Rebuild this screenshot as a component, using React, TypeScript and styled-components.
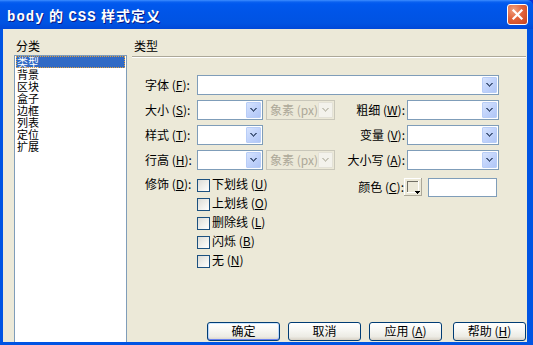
import React from 'react';
import styled, { createGlobalStyle } from 'styled-components';

const GlobalStyle = createGlobalStyle`
  html, body { margin: 0; padding: 0; background: #0831D9; }
  body {
    font-family: "Noto Sans CJK SC", "Liberation Sans", sans-serif;
    font-size: 12px;
    color: #000;
  }
  * { box-sizing: border-box; }
`;

const Window = styled.div`
  width: 533px;
  height: 345px;
  display: flex;
  flex-direction: column;
  background: #0054E3;
  border-top-right-radius: 6px;
  overflow: hidden;
`;

const TitleBar = styled.div`
  height: 29px;
  flex: none;
  display: flex;
  align-items: center;
  justify-content: space-between;
  padding: 1px 5px 0 7px;
  background: linear-gradient(
    to bottom,
    #3D8DFF 0px,
    #0A61F0 2px,
    #0058EE 4px,
    #0055E8 40%,
    #0053E2 80%,
    #0048D8 100%
  );
`;

const TitleText = styled.div`
  color: #fff;
  font-family: "Liberation Mono", "Noto Sans CJK SC", monospace;
  font-weight: bold;
  font-size: 14px;
  letter-spacing: 1px;
  word-spacing: -5px;
  text-shadow: 1px 1px 0 #0A1883;
  white-space: nowrap;
`;

const CloseButton = styled.div`
  width: 21px;
  height: 21px;
  border: 1px solid #fff;
  border-radius: 3px;
  background: radial-gradient(circle at 30% 25%, #F0A080 0%, #E2643C 45%, #C6421C 100%);
  display: flex;
  align-items: center;
  justify-content: center;
  margin-top: -1px;
`;

const Client = styled.div`
  flex: 1;
  margin: 0 6px 3px 3px;
  background: #ECE9D8;
  display: grid;
  grid-template-columns: 113px 1fr;
  column-gap: 5px;
  padding: 10px 3px 0 11px;
  min-height: 0;
`;

const Column = styled.div`
  display: flex;
  flex-direction: column;
  min-height: 0;
`;

const Caption = styled.div`
  line-height: 14px;
  height: 14px;
  padding-left: 2px;
  margin-bottom: 2px;
  white-space: nowrap;
`;

const ListBox = styled.div`
  flex: 1;
  background: #fff;
  border: 1px solid #7F9DB9;
  border-bottom: none;
  padding-top: 0;
`;

const ListItem = styled.div<{ $selected?: boolean }>`
  height: 12px;
  line-height: 12px;
  font-size: 11px;
  margin: 0 1px;
  padding-left: 1px;
  white-space: nowrap;
  background: ${p => (p.$selected ? '#316AC5' : 'transparent')};
  color: ${p => (p.$selected ? '#fff' : '#000')};
  outline: ${p => (p.$selected ? '1px dotted #E0A040' : 'none')};
  outline-offset: -1px;
`;

const Divider = styled.div`
  height: 2px;
  margin-top: 1px;
  border-top: 1px solid #ACA899;
  border-bottom: 1px solid #fff;
`;

const Form = styled.div`
  display: flex;
  flex-direction: column;
  gap: 5px;
  margin-top: 17px;
  padding-left: 13px;
`;

const Row = styled.div<{ $top?: boolean; $mt?: number }>`
  display: flex;
  align-items: ${p => (p.$top ? 'flex-start' : 'center')};
  height: ${p => (p.$top ? 'auto' : '20px')};
  margin-top: ${p => p.$mt ?? 0}px;
`;

const FieldLabel = styled.span<{ $w: number; $right?: boolean; $mr?: number }>`
  width: ${p => p.$w}px;
  flex: none;
  text-align: ${p => (p.$right ? 'right' : 'left')};
  margin-right: ${p => p.$mr ?? 0}px;
  line-height: 14px;
  white-space: nowrap;
`;

const Key = styled.span`
  text-decoration: underline;
`;

const Combo = styled.div<{ $w: number; $ml?: number; $disabled?: boolean }>`
  width: ${p => p.$w}px;
  height: 20px;
  flex: none;
  margin-left: ${p => p.$ml ?? 0}px;
  border: 1px solid ${p => (p.$disabled ? '#C9C7BA' : '#7F9DB9')};
  background: ${p => (p.$disabled ? '#ECE9D8' : '#fff')};
  padding: 1px;
  display: flex;
  align-items: stretch;
  justify-content: space-between;
`;

const ComboText = styled.span`
  color: #ACA899;
  line-height: 16px;
  padding-left: 2px;
  white-space: nowrap;
  overflow: hidden;
`;

const DropButton = styled.div<{ $disabled?: boolean }>`
  width: 15px;
  flex: none;
  margin-left: auto;
  border: 1px solid ${p => (p.$disabled ? '#E3E1D7' : '#B8CDF7')};
  border-radius: 1px;
  background: ${p =>
    p.$disabled
      ? '#F3F2EC'
      : 'linear-gradient(135deg, #D6E3FD 0%, #C1D3FB 50%, #B0C6F6 100%)'};
  display: flex;
  align-items: center;
  justify-content: center;
`;

const Spacer = styled.div<{ $w: number }>`
  width: ${p => p.$w}px;
  flex: none;
`;

const CheckList = styled.div`
  width: 138px;
  flex: none;
  display: flex;
  flex-direction: column;
`;

const CheckItem = styled.div`
  height: 19px;
  display: flex;
  align-items: flex-start;
  gap: 2px;
  white-space: nowrap;
  line-height: 14px;
`;

const CheckBox = styled.span`
  width: 13px;
  height: 13px;
  flex: none;
  margin-top: 2px;
  border: 1px solid #1C5180;
  background: linear-gradient(135deg, #DCDCD7 0%, #F0F0EC 55%, #FFFFFF 100%);
`;

const ColorGroup = styled.div`
  display: flex;
  align-items: center;
  height: 20px;
`;

const Swatch = styled.div`
  width: 18px;
  height: 18px;
  flex: none;
`;

const TextBox = styled.div<{ $w: number; $ml?: number }>`
  width: ${p => p.$w}px;
  height: 19px;
  flex: none;
  margin-left: ${p => p.$ml ?? 0}px;
  border: 1px solid #7F9DB9;
  background: #fff;
`;

const Grow = styled.div`
  flex: 1;
`;

const ButtonBar = styled.div`
  display: flex;
  gap: 8px;
  padding-left: 75px;
  padding-bottom: 1px;
`;

const Button = styled.div<{ $default?: boolean; $ml?: number }>`
  width: 73px;
  height: 19px;
  flex: none;
  margin-left: ${p => p.$ml ?? 0}px;
  border: 1px solid #003C74;
  border-radius: 3px;
  background: linear-gradient(to bottom, #FFFFFF 0%, #F6F6F2 45%, #ECEBE4 80%, #D8D2C6 100%);
  box-shadow: ${p =>
    p.$default
      ? 'inset 0 1px 0 #CEE7FF, inset 0 -1px 0 #6982EE, inset 1px 0 0 #B8D6FB, inset -1px 0 0 #B8D6FB'
      : 'none'};
  text-align: center;
  line-height: 16px;
  white-space: nowrap;
`;

const Chevron: React.FC<{ color: string }> = ({ color }) => (
  <svg width="7" height="4" viewBox="0 0 7 4" shapeRendering="crispEdges">
    <rect x="0" y="0" width="2" height="1" fill={color} />
    <rect x="5" y="0" width="2" height="1" fill={color} />
    <rect x="1" y="1" width="2" height="1" fill={color} />
    <rect x="4" y="1" width="2" height="1" fill={color} />
    <rect x="2" y="2" width="3" height="1" fill={color} />
    <rect x="3" y="3" width="1" height="1" fill={color} />
  </svg>
);

const ComboBox: React.FC<{ w: number; ml?: number; disabled?: boolean; text?: string }> = ({
  w,
  ml,
  disabled,
  text,
}) => (
  <Combo $w={w} $ml={ml} $disabled={disabled}>
    {text ? <ComboText>{text}</ComboText> : null}
    <DropButton $disabled={disabled}>
      <Chevron color={disabled ? '#C9C7BA' : '#4D6185'} />
    </DropButton>
  </Combo>
);

const Lbl: React.FC<{ text: string; k: string; w: number; right?: boolean; mr?: number }> = ({
  text,
  k,
  w,
  right,
  mr,
}) => (
  <FieldLabel $w={w} $right={right} $mr={mr}>
    {text} (<Key>{k}</Key>):
  </FieldLabel>
);

const ColorSwatch = () => (
  <Swatch>
    <svg width="18" height="18" viewBox="0 0 18 18" shapeRendering="crispEdges">
      <rect x="0" y="0" width="18" height="18" fill="#ECE9D8" />
      <rect x="0" y="0" width="18" height="1" fill="#FFFFFF" />
      <rect x="0" y="0" width="1" height="18" fill="#FFFFFF" />
      <rect x="0" y="17" width="18" height="1" fill="#ACA899" />
      <rect x="17" y="0" width="1" height="18" fill="#ACA899" />
      <rect x="3" y="3" width="11" height="1" fill="#716F64" />
      <rect x="3" y="3" width="1" height="11" fill="#716F64" />
      <rect x="3" y="14" width="12" height="1" fill="#FFFFFF" />
      <rect x="14" y="3" width="1" height="12" fill="#FFFFFF" />
      <rect x="11" y="13" width="5" height="1" fill="#000" />
      <rect x="12" y="14" width="3" height="1" fill="#000" />
      <rect x="13" y="15" width="1" height="1" fill="#000" />
    </svg>
  </Swatch>
);

const categories = ['类型', '背景', '区块', '盒子', '边框', '列表', '定位', '扩展'];

const decorations: [string, string][] = [
  ['下划线', 'U'],
  ['上划线', 'O'],
  ['删除线', 'L'],
  ['闪烁', 'B'],
  ['无', 'N'],
];

export default function App() {
  return (
    <>
      <GlobalStyle />
      <Window>
        <TitleBar>
          <TitleText>body 的 CSS 样式定义</TitleText>
          <CloseButton>
            <svg width="13" height="13" viewBox="0 0 13 13">
              <path d="M2.5 2.5 L10.5 10.5 M10.5 2.5 L2.5 10.5" stroke="#fff" strokeWidth="2.2" strokeLinecap="square" />
            </svg>
          </CloseButton>
        </TitleBar>
        <Client>
          <Column>
            <Caption>分类</Caption>
            <ListBox>
              {categories.map((c, i) => (
                <ListItem key={c} $selected={i === 0}>
                  {c}
                </ListItem>
              ))}
            </ListBox>
          </Column>
          <Column>
            <Caption>类型</Caption>
            <Divider />
            <Form>
              <Row>
                <Lbl text="字体" k="F" w={52} />
                <ComboBox w={302} />
              </Row>
              <Row>
                <Lbl text="大小" k="S" w={52} />
                <ComboBox w={66} />
                <ComboBox w={69} ml={3} disabled text="象素 (px)" />
                <Lbl text="粗细" k="W" w={70} right mr={2} />
                <ComboBox w={92} />
              </Row>
              <Row>
                <Lbl text="样式" k="T" w={52} />
                <ComboBox w={66} />
                <Spacer $w={72} />
                <Lbl text="变量" k="V" w={70} right mr={2} />
                <ComboBox w={92} />
              </Row>
              <Row>
                <Lbl text="行高" k="H" w={52} />
                <ComboBox w={66} />
                <ComboBox w={69} ml={3} disabled text="象素 (px)" />
                <Lbl text="大小写" k="A" w={70} right mr={2} />
                <ComboBox w={92} />
              </Row>
              <Row $top $mt={2}>
                <Lbl text="修饰" k="D" w={52} />
                <CheckList>
                  {decorations.map(([t, k]) => (
                    <CheckItem key={k}>
                      <CheckBox />
                      <span>
                        {t} (<Key>{k}</Key>)
                      </span>
                    </CheckItem>
                  ))}
                </CheckList>
                <ColorGroup>
                  <Lbl text="颜色" k="C" w={69} right />
                  <ColorSwatch />
                  <TextBox $w={69} $ml={6} />
                </ColorGroup>
              </Row>
            </Form>
            <Grow />
            <ButtonBar>
              <Button $default>确定</Button>
              <Button>取消</Button>
              <Button>
                应用 (<Key>A</Key>)
              </Button>
              <Button $ml={3}>
                帮助 (<Key>H</Key>)
              </Button>
            </ButtonBar>
          </Column>
        </Client>
      </Window>
    </>
  );
}
